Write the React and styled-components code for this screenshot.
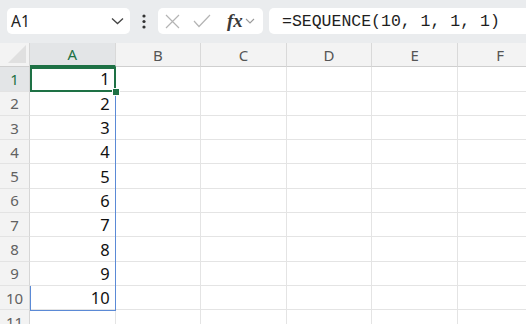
import React from 'react'
import styled, { createGlobalStyle } from 'styled-components'

const GlobalStyle = createGlobalStyle`
    html, body {
        margin: 0;
        padding: 0;
        background: #ffffff;
    }
    body {
        font-family: "Noto Sans", "Open Sans", sans-serif;
    }
`;

const Page = styled.div`
    width: 526px;
    height: 324px;
    overflow: hidden;
    background: #ffffff;
`;

const Toolbar = styled.div`
    display: flex;
    align-items: center;
    height: 43px;
    padding: 0 0 1px 7px;
    box-sizing: border-box;
    background: #eaecee;
`;

const NameBox = styled.div`
    display: flex;
    align-items: center;
    justify-content: space-between;
    width: 123px;
    height: 26px;
    padding: 0 6px 0 4px;
    box-sizing: border-box;
    background: #fff;
    border-radius: 5px;
    font-size: 15.5px;
    color: #222;
`;

const Dots = styled.div`
    width: 28px;
    display: flex;
    justify-content: center;
`;

const IconBox = styled.div`
    display: flex;
    align-items: center;
    width: 105px;
    height: 26px;
    padding: 0 6px 0 7px;
    box-sizing: border-box;
    gap: 13px;
    background: #fff;
    border-radius: 5px;
`;

const Fx = styled.span`
    font-family: "Liberation Serif", "DejaVu Serif", serif;
    font-style: italic;
    font-weight: bold;
    font-size: 19px;
    color: #3a3a3a;
    display: flex;
    align-items: center;
    gap: 2px;
    margin-left: 3px;
`;

const FormulaBar = styled.div`
    flex: 1;
    margin-left: 6px;
    height: 26px;
    display: flex;
    align-items: center;
    padding-left: 13px;
    background: #fff;
    border-radius: 5px 0 0 5px;
    font-family: "Liberation Mono", "DejaVu Sans Mono", monospace;
    font-size: 16.5px;
    color: #1e1e1e;
`;

const Sheet = styled.div`
    position: relative;
    display: grid;
    grid-template-columns: 30px repeat(6, 85.6px);
    grid-auto-rows: 24.3px;
`;

const Corner = styled.div`
    position: relative;
    background: #f3f3f3;
    border-right: 1px solid #d6d6d6;
    border-bottom: 1px solid #cfcfcf;
    box-sizing: border-box;
    height: 24px;

    &::after {
        content: '';
        position: absolute;
        right: 3px;
        bottom: 3px;
        border-style: solid;
        border-width: 0 0 18px 18px;
        border-color: transparent transparent #e0e0e0 transparent;
    }
`;

const ColHead = styled.div`
    height: 24px;
    display: flex;
    align-items: center;
    justify-content: center;
    box-sizing: border-box;
    font-size: 15px;
    background: ${p => (p.$active ? '#e3e5e7' : '#f3f3f3')};
    color: ${p => (p.$active ? '#1e7145' : '#555')};
    border-right: 1px solid #d9d9d9;
    border-bottom: ${p => (p.$active ? '2px solid #1e7145' : '1px solid #cfcfcf')};
`;

const RowHead = styled.div`
    display: flex;
    align-items: center;
    justify-content: center;
    box-sizing: border-box;
    font-size: 15px;
    background: ${p => (p.$active ? '#e3e5e7' : '#f3f3f3')};
    color: ${p => (p.$active ? '#1e7145' : '#616161')};
    border-right: 1px solid #d6d6d6;
    border-bottom: 1px solid #e3e3e3;
`;

const Cell = styled.div`
    display: flex;
    align-items: center;
    justify-content: flex-end;
    padding-right: 5px;
    box-sizing: border-box;
    font-size: 16.5px;
    color: #111;
    border-right: 1px solid #e4e4e4;
    border-bottom: 1px solid #e4e4e4;
`;

const Range = styled.div`
    position: absolute;
    left: 30px;
    top: 24px;
    width: 86px;
    height: 244px;
    box-sizing: border-box;
    border: 1px solid #5b8ad6;
    border-left: none;
    pointer-events: none;

    &::before {
        content: '';
        position: absolute;
        left: 0;
        bottom: 0;
        width: 1px;
        height: 24px;
        background: #5b8ad6;
    }
`;

const Active = styled.div`
    position: absolute;
    left: 30px;
    top: 24px;
    width: 86px;
    height: 25px;
    box-sizing: border-box;
    border: 2px solid #1e7145;
    pointer-events: none;
`;

const Handle = styled.div`
    position: absolute;
    left: 112px;
    top: 45px;
    width: 6px;
    height: 6px;
    background: #1e7145;
    border: 1px solid #fff;
    box-sizing: content-box;
`;

const columns = ['A', 'B', 'C', 'D', 'E', 'F']
const rows = Array.from({ length: 11 }, (_, i) => i + 1)

function App() {
    return (
        <Page>
            <GlobalStyle />
            <Toolbar>
                <NameBox>
                    <span>A1</span>
                    <svg width="13" height="8" viewBox="0 0 13 8">
                        <path d="M1 1.5 L6.5 6.5 L12 1.5" fill="none" stroke="#444" strokeWidth="1.3" />
                    </svg>
                </NameBox>
                <Dots>
                    <svg width="4" height="15" viewBox="0 0 4 15">
                        <circle cx="2" cy="2" r="1.6" fill="#333" />
                        <circle cx="2" cy="7.5" r="1.6" fill="#333" />
                        <circle cx="2" cy="13" r="1.6" fill="#333" />
                    </svg>
                </Dots>
                <IconBox>
                    <svg width="15" height="15" viewBox="0 0 15 15">
                        <path d="M1 1 L14 14 M14 1 L1 14" stroke="#b4b4b4" strokeWidth="1.2" />
                    </svg>
                    <svg width="18" height="14" viewBox="0 0 18 14">
                        <path d="M1 7 L6 12.5 L17 1" fill="none" stroke="#b4b4b4" strokeWidth="1.2" />
                    </svg>
                    <Fx>
                        fx
                        <svg width="10" height="6" viewBox="0 0 10 6">
                            <path d="M1 1 L5 5 L9 1" fill="none" stroke="#9a9a9a" strokeWidth="1.1" />
                        </svg>
                    </Fx>
                </IconBox>
                <FormulaBar>=SEQUENCE(10, 1, 1, 1)</FormulaBar>
            </Toolbar>
            <Sheet>
                <Corner />
                {columns.map(c => (
                    <ColHead key={c} $active={c === 'A'}>{c}</ColHead>
                ))}
                {rows.map(r => (
                    <React.Fragment key={r}>
                        <RowHead $active={r === 1}>{r}</RowHead>
                        {columns.map(c => (
                            <Cell key={c}>{c === 'A' && r <= 10 ? r : ''}</Cell>
                        ))}
                    </React.Fragment>
                ))}
                <Range />
                <Active />
                <Handle />
            </Sheet>
        </Page>
    )
}

export default App
